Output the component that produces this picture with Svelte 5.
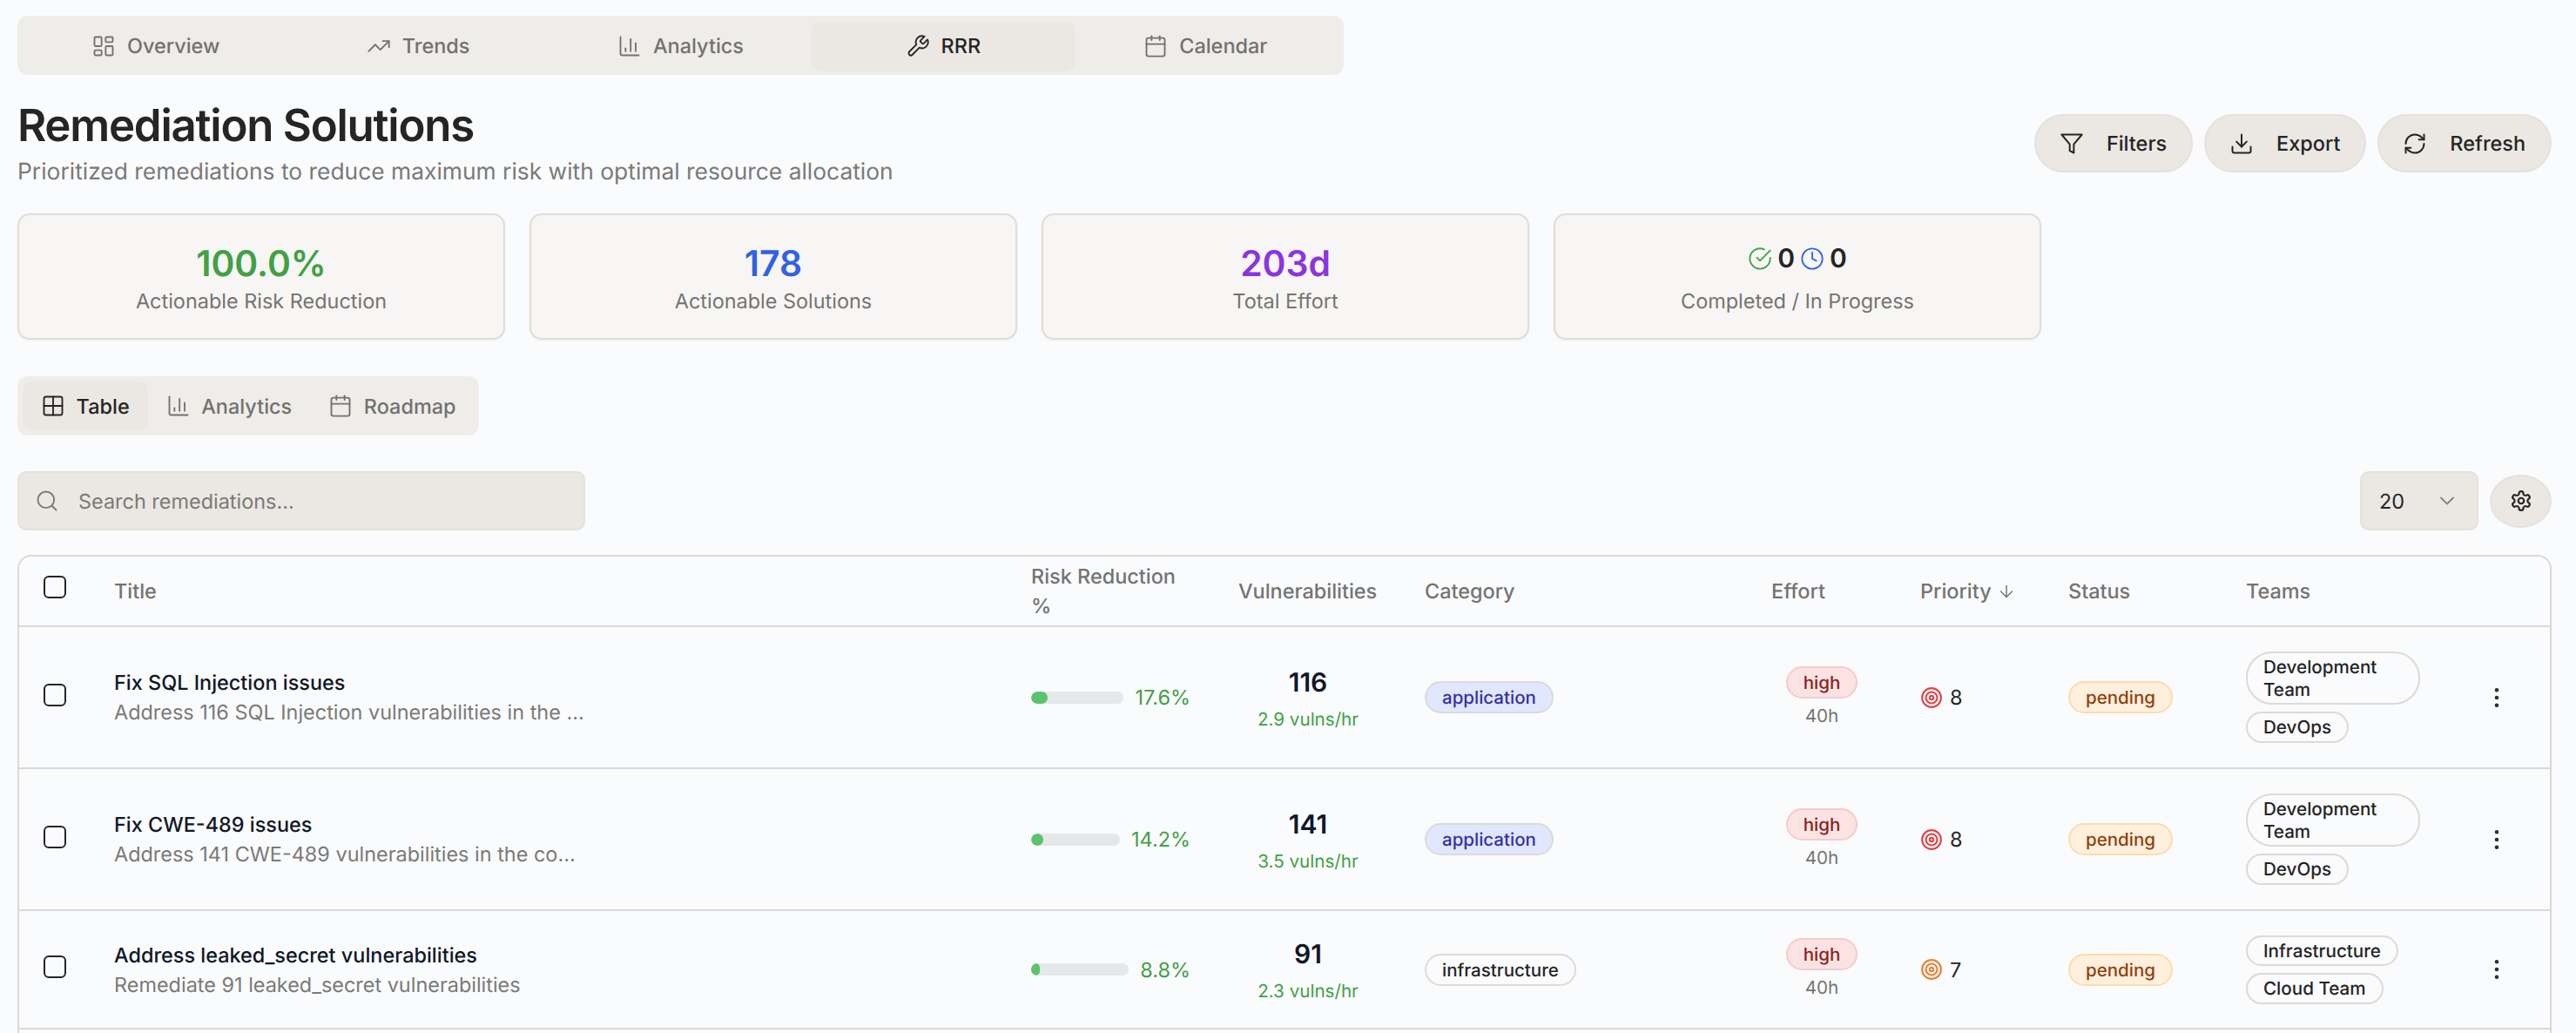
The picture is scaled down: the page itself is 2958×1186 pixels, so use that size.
<script>
  const rows = [
    { title: 'Fix SQL Injection issues', desc: 'Address 116 SQL Injection vulnerabilities in the …', pct: '17.6%', fill: 19, vulns: '116', rate: '2.9 vulns/hr', cat: 'application', prio: 8, tone: 'red', teams: ['Development Team', 'DevOps'], h: 'tall' },
    { title: 'Fix CWE-489 issues', desc: 'Address 141 CWE-489 vulnerabilities in the co…', pct: '14.2%', fill: 14, vulns: '141', rate: '3.5 vulns/hr', cat: 'application', prio: 8, tone: 'red', teams: ['Development Team', 'DevOps'], h: 'tall' },
    { title: 'Address leaked_secret vulnerabilities', desc: 'Remediate 91 leaked_secret vulnerabilities', pct: '8.8%', fill: 10, vulns: '91', rate: '2.3 vulns/hr', cat: 'infrastructure', prio: 7, tone: 'orange', teams: ['Infrastructure', 'Cloud Team'], h: 'short' }
  ];
  const tabs = ['Overview', 'Trends', 'Analytics', 'RRR', 'Calendar'];
</script>

{#snippet icon(name, size = 28)}
  <svg class="ic" width={size} height={size} viewBox="0 0 24 24" fill="none" stroke="currentColor" stroke-width="2" stroke-linecap="round" stroke-linejoin="round">
    {#if name === 'Overview'}
      <rect x="3" y="3" width="7" height="9" rx="1" /><rect x="14" y="3" width="7" height="5" rx="1" /><rect x="14" y="12" width="7" height="9" rx="1" /><rect x="3" y="16" width="7" height="5" rx="1" />
    {:else if name === 'Trends'}
      <polyline points="22 7 13.5 15.5 8.5 10.5 2 17" /><polyline points="16 7 22 7 22 13" />
    {:else if name === 'Analytics'}
      <path d="M3 3v16a2 2 0 0 0 2 2h16" /><path d="M18 17V9" /><path d="M13 17V5" /><path d="M8 17v-3" />
    {:else if name === 'RRR'}
      <path d="M14.7 6.3a1 1 0 0 0 0 1.4l1.6 1.6a1 1 0 0 0 1.4 0l3.77-3.77a6 6 0 0 1-7.94 7.94l-6.91 6.91a2.12 2.12 0 0 1-3-3l6.91-6.91a6 6 0 0 1 7.94-7.94l-3.76 3.76z" />
    {:else if name === 'Calendar'}
      <path d="M8 2v4" /><path d="M16 2v4" /><rect x="3" y="4" width="18" height="18" rx="2" /><path d="M3 10h18" />
    {:else if name === 'Filters'}
      <polygon points="22 3 2 3 10 12.46 10 19 14 21 14 12.46 22 3" />
    {:else if name === 'Export'}
      <path d="M21 15v4a2 2 0 0 1-2 2H5a2 2 0 0 1-2-2v-4" /><polyline points="7 10 12 15 17 10" /><line x1="12" y1="15" x2="12" y2="3" />
    {:else if name === 'Refresh'}
      <path d="M3 12a9 9 0 0 1 9-9 9.75 9.75 0 0 1 6.74 2.74L21 8" /><path d="M21 3v5h-5" /><path d="M21 12a9 9 0 0 1-9 9 9.75 9.75 0 0 1-6.74-2.74L3 16" /><path d="M8 16H3v5" />
    {:else if name === 'Table'}
      <rect x="3" y="3" width="18" height="18" rx="2" /><path d="M12 3v18" /><path d="M3 12h18" />
    {:else if name === 'Search'}
      <circle cx="11" cy="11" r="8" /><path d="m21 21-4.3-4.3" />
    {:else if name === 'Chevron'}
      <path d="m6 9 6 6 6-6" />
    {:else if name === 'Gear'}
      <path d="M12.22 2h-.44a2 2 0 0 0-2 2v.18a2 2 0 0 1-1 1.73l-.43.25a2 2 0 0 1-2 0l-.15-.08a2 2 0 0 0-2.73.73l-.22.38a2 2 0 0 0 .73 2.73l.15.1a2 2 0 0 1 1 1.72v.51a2 2 0 0 1-1 1.74l-.15.09a2 2 0 0 0-.73 2.73l.22.38a2 2 0 0 0 2.73.73l.15-.08a2 2 0 0 1 2 0l.43.25a2 2 0 0 1 1 1.73V20a2 2 0 0 0 2 2h.44a2 2 0 0 0 2-2v-.18a2 2 0 0 1 1-1.73l.43-.25a2 2 0 0 1 2 0l.15.08a2 2 0 0 0 2.73-.73l.22-.39a2 2 0 0 0-.73-2.73l-.15-.08a2 2 0 0 1-1-1.74v-.5a2 2 0 0 1 1-1.74l.15-.09a2 2 0 0 0 .73-2.73l-.22-.38a2 2 0 0 0-2.73-.73l-.15.08a2 2 0 0 1-2 0l-.43-.25a2 2 0 0 1-1-1.73V4a2 2 0 0 0-2-2z" /><circle cx="12" cy="12" r="3" />
    {:else if name === 'Arrow'}
      <path d="M12 5v14" /><path d="m19 12-7 7-7-7" />
    {:else if name === 'Check'}
      <path d="M22 11.08V12a10 10 0 1 1-5.93-9.14" /><polyline points="22 4 12 14.01 9 11.01" />
    {:else if name === 'Clock'}
      <circle cx="12" cy="12" r="10" /><polyline points="12 6 12 12 16 14" />
    {:else if name === 'Target'}
      <circle cx="12" cy="12" r="10" /><circle cx="12" cy="12" r="6" /><circle cx="12" cy="12" r="2" />
    {:else if name === 'More'}
      <circle cx="12" cy="12" r="1" /><circle cx="12" cy="5" r="1" /><circle cx="12" cy="19" r="1" />
    {/if}
  </svg>
{/snippet}

<div class="page">
  <nav class="tabs">
    {#each tabs as t}
      <div class="tab" class:active={t === 'RRR'}>{@render icon(t)}<span>{t}</span></div>
    {/each}
  </nav>

  <header class="head">
    <div>
      <h1>Remediation Solutions</h1>
      <p>Prioritized remediations to reduce maximum risk with optimal resource allocation</p>
    </div>
    <div class="actions">
      <button class="pill">{@render icon('Filters')}<span>Filters</span></button>
      <button class="pill">{@render icon('Export')}<span>Export</span></button>
      <button class="pill">{@render icon('Refresh')}<span>Refresh</span></button>
    </div>
  </header>

  <section class="stats">
    <div class="card"><div class="val green">100.0%</div><div class="lab">Actionable Risk Reduction</div></div>
    <div class="card"><div class="val blue">178</div><div class="lab">Actionable Solutions</div></div>
    <div class="card"><div class="val purple">203d</div><div class="lab">Total Effort</div></div>
    <div class="card">
      <div class="val mixed"><span class="green">{@render icon('Check', 28)}</span><b>0</b><span class="blue">{@render icon('Clock', 28)}</span><b>0</b></div>
      <div class="lab">Completed / In Progress</div>
    </div>
  </section>

  <div class="subtabs">
    <div class="sub active">{@render icon('Table')}<span>Table</span></div>
    <div class="sub">{@render icon('Analytics')}<span>Analytics</span></div>
    <div class="sub">{@render icon('Calendar')}<span>Roadmap</span></div>
  </div>

  <div class="toolbar">
    <div class="search">{@render icon('Search')}<span>Search remediations...</span></div>
    <div class="tools">
      <div class="select"><span>20</span>{@render icon('Chevron')}</div>
      <button class="gear">{@render icon('Gear', 26)}</button>
    </div>
  </div>

  <div class="tablewrap">
    <table>
      <colgroup>
        <col style="width:93px" /><col style="width:1053px" /><col style="width:238px" /><col style="width:214px" /><col style="width:398px" /><col style="width:171px" /><col style="width:170px" /><col style="width:204px" /><col style="width:250px" /><col />
      </colgroup>
      <thead>
        <tr>
          <th class="chk"><span class="box"></span></th>
          <th>Title</th>
          <th><span class="wrapper">Risk Reduction %</span></th>
          <th>Vulnerabilities</th>
          <th>Category</th>
          <th>Effort</th>
          <th><span class="prioh">Priority {@render icon('Arrow', 22)}</span></th>
          <th>Status</th>
          <th>Teams</th>
          <th></th>
        </tr>
      </thead>
      <tbody>
        {#each rows as r}
          <tr class={r.h}>
            <td class="chk"><span class="box"></span></td>
            <td>
              <div class="rt">{r.title}</div>
              <div class="rd">{r.desc}</div>
            </td>
            <td>
              <div class="risk">
                <div class="bar"><div class="fill" style="width:{r.fill}px"></div></div>
                <span>{r.pct}</span>
              </div>
            </td>
            <td>
              <div class="vuln"><strong>{r.vulns}</strong><small>{r.rate}</small></div>
            </td>
            <td><span class="badge {r.cat}">{r.cat}</span></td>
            <td>
              <div class="effort"><span class="badge high">high</span><small>40h</small></div>
            </td>
            <td><div class="prio"><span class={r.tone}>{@render icon('Target', 26)}</span><span>{r.prio}</span></div></td>
            <td><span class="badge pending">pending</span></td>
            <td>
              <div class="teams">
                {#each r.teams as t}<span class="team">{t}</span>{/each}
              </div>
            </td>
            <td class="more">{@render icon('More', 30)}</td>
          </tr>
        {/each}
        <tr class="last"><td colspan="10"></td></tr>
      </tbody>
    </table>
  </div>
</div>

<style>
  :global(body) {
    margin: 0;
    background: #fafbfd;
    font-family: Inter, "Liberation Sans", sans-serif;
    color: #252525;
    overflow: hidden;
    text-rendering: geometricPrecision;
  }
  .page {
    height: 1186px;
    overflow: hidden;
    box-sizing: border-box;
    padding: 18px 28px 0 20px;
  }
  .ic { display: block; flex: none; }
  .tabs {
    width: 1523px;
    height: 68px;
    box-sizing: border-box;
    padding: 7px 8px 6px;
    display: grid;
    grid-template-columns: repeat(5, 1fr);
    background: #efede9;
    border-radius: 12px;
  }
  .tab {
    display: flex;
    align-items: center;
    justify-content: center;
    gap: 13px;
    font-size: 23.44px;
    font-weight: 500;
    color: #737270;
    border-radius: 10px;
  }
  .tab .ic { stroke-width: 1.6; }
  .tab.active { background: #ebe8e3; color: #252525; box-shadow: 0 1px 3px rgba(0,0,0,.04); }

  .head {
    margin-top: 26px;
    display: flex;
    justify-content: space-between;
    align-items: center;
  }
  h1 {
    margin: 0;
    font-size: 51px;
    line-height: 65px;
    font-weight: 600;
    letter-spacing: -1.25px;
    color: #252525;
  }
  .head p {
    margin: 0;
    font-size: 26.4px;
    line-height: 40px;
    color: #7b7a78;
  }
  .actions { display: flex; gap: 13px; }
  .pill {
    height: 67px;
    box-sizing: border-box;
    display: flex;
    align-items: center;
    gap: 26px;
    padding: 0 28px 0 27px;
    background: #ebe8e3;
    border: 2px solid #e5e2dc;
    border-radius: 34px;
    font: 500 23.44px Inter, sans-serif;
    text-rendering: geometricPrecision;
    color: #252525;
  }
  .pill .ic { stroke-width: 1.7; }

  .stats {
    margin-top: 28px;
    display: grid;
    grid-template-columns: repeat(4, 560px);
    gap: 28px;
  }
  .card {
    height: 145px;
    box-sizing: border-box;
    padding-top: 4px;
    display: flex;
    flex-direction: column;
    align-items: center;
    justify-content: center;
    background: #f7f6f4;
    border: 2px solid #e0ddd7;
    border-radius: 14px;
    box-shadow: 0 1px 3px rgba(0,0,0,.05);
  }
  .val { font-size: 40.8px; line-height: 52px; font-weight: 600; }
  .lab { font-size: 23.44px; line-height: 36px; color: #757472; }
  .green { color: #43a047; }
  .blue { color: #2f62e6; }
  .purple { color: #8a35e0; }
  .mixed { display: flex; align-items: center; gap: 6px; font-size: 30px; margin-top: -5px; margin-bottom: 5px; }
  .mixed b { font-weight: 600; color: #252525; }
  .mixed .ic { stroke-width: 1.6; }

  .subtabs {
    margin-top: 42px;
    width: 530px;
    height: 68px;
    box-sizing: border-box;
    padding: 6px;
    display: flex;
    background: #efede9;
    border-radius: 12px;
  }
  .sub {
    display: flex;
    align-items: center;
    gap: 12.6px;
    padding: 0 21px;
    font-size: 23.44px;
    font-weight: 500;
    color: #737270;
    border-radius: 10px;
  }
  .sub .ic { stroke-width: 1.6; }
  .sub.active { background: #ebe8e3; color: #252525; }

  .toolbar {
    margin-top: 41px;
    display: flex;
    justify-content: space-between;
    align-items: center;
  }
  .search {
    width: 652px;
    height: 68px;
    box-sizing: border-box;
    display: flex;
    align-items: center;
    gap: 22px;
    padding-left: 18px;
    background: #ebe8e3;
    border: 2px solid #e5e2dc;
    border-radius: 10px;
    font-size: 23.44px;
    color: #7b7a78;
  }
  .search .ic { stroke-width: 1.6; }
  .tools { display: flex; align-items: center; gap: 13px; }
  .select {
    width: 136px;
    height: 68px;
    box-sizing: border-box;
    display: flex;
    align-items: center;
    justify-content: space-between;
    padding: 0 20px;
    background: #ebe8e3;
    border: 2px solid #e5e2dc;
    border-radius: 10px;
    font-size: 23.44px;
  }
  .select .ic { color: #858482; stroke-width: 1.6; }
  .gear {
    width: 71px;
    height: 61px;
    padding: 0;
    display: flex;
    align-items: center;
    justify-content: center;
    background: #ebe8e3;
    border: 2px solid #e5e2dc;
    border-radius: 50%;
    color: #252525;
  }

  .tablewrap {
    margin-top: 28px;
    height: 600px;
    border: 2px solid #dbd9d3;
    border-bottom: 0;
    border-radius: 16px 16px 0 0;
  }
  table {
    width: 100%;
    table-layout: fixed;
    border-collapse: collapse;
  }
  thead tr { height: 80px; }
  th {
    padding: 0 16px;
    text-align: left;
    font-size: 23.44px;
    line-height: 34px;
    font-weight: 500;
    color: #757472;
    border-bottom: 2px solid #dbd9d3;
  }
  td {
    padding: 0 16px;
    border-bottom: 2px solid #dbd9d3;
    font-size: 23.44px;
    vertical-align: middle;
  }
  tr.tall { height: 163px; }
  tr.short { height: 136px; }
  tr.last { height: 60px; }
  tr.last td { border: 0; }
  .wrapper { display: block; width: 182px; }
  .prioh { display: flex; align-items: center; gap: 6px; }
  .prioh .ic { stroke-width: 1.6; }
  .chk { padding: 0 0 0 28px; }
  .box {
    display: block;
    width: 26px;
    height: 26px;
    box-sizing: border-box;
    border: 2px solid #252525;
    border-radius: 6px;
    margin-bottom: 6px;
  }
  th.chk .box { margin-bottom: 10px; }
  .rt { line-height: 34px; font-weight: 500; color: #111827; margin-top: 1px; }
  .rd {
    line-height: 34px;
    color: #7b7a78;
    white-space: nowrap;
  }
  .risk { width: 183px; display: flex; align-items: center; gap: 13px; color: #43a047; }
  .bar { flex: 1; height: 14px; background: #e5e7eb; border-radius: 7px; overflow: hidden; }
  .fill { height: 100%; background: #5cc36c; border-radius: 7px; }
  .vuln { width: 160px; display: flex; flex-direction: column; align-items: center; margin-top: 2px; }
  .vuln strong { font-size: 30px; line-height: 42px; font-weight: 600; color: #111827; }
  .vuln small { margin-top: 6px; font-size: 20.625px; line-height: 30px; color: #43a047; }
  .badge {
    display: inline-flex;
    align-items: center;
    height: 37px;
    box-sizing: border-box;
    padding: 0 18px;
    border: 2px solid #dedad4;
    border-radius: 19px;
    font-size: 20.5px;
    font-weight: 500;
    color: #252525;
  }
  .application { background: #e0e7ff; color: #3730a3; }
  .high { background: #fbe3e3; border-color: #f6cbcb; color: #8b1e1e; }
  .pending { background: #fef0dc; border-color: #fbdcae; color: #92400e; }
  .effort { width: 116px; display: flex; flex-direction: column; align-items: center; gap: 4px; margin-top: 1px; }
  .effort small { font-size: 20.625px; line-height: 32px; color: #757472; }
  .prio { display: flex; align-items: center; gap: 8px; }
  .red { color: #dc4a4a; }
  .orange { color: #e8833a; }
  .teams { display: flex; flex-direction: column; align-items: flex-start; gap: 8px; max-width: 200px; }
  .team {
    box-sizing: border-box;
    padding: 3px 18px;
    border: 2px solid #dedad4;
    border-radius: 30px;
    font-size: 20.625px;
    line-height: 25.5px;
    font-weight: 500;
    color: #252525;
  }
  .more { padding: 0; color: #2c2c2c; }
  .more .ic { margin-left: 39px; stroke-width: 1.7; }
</style>
